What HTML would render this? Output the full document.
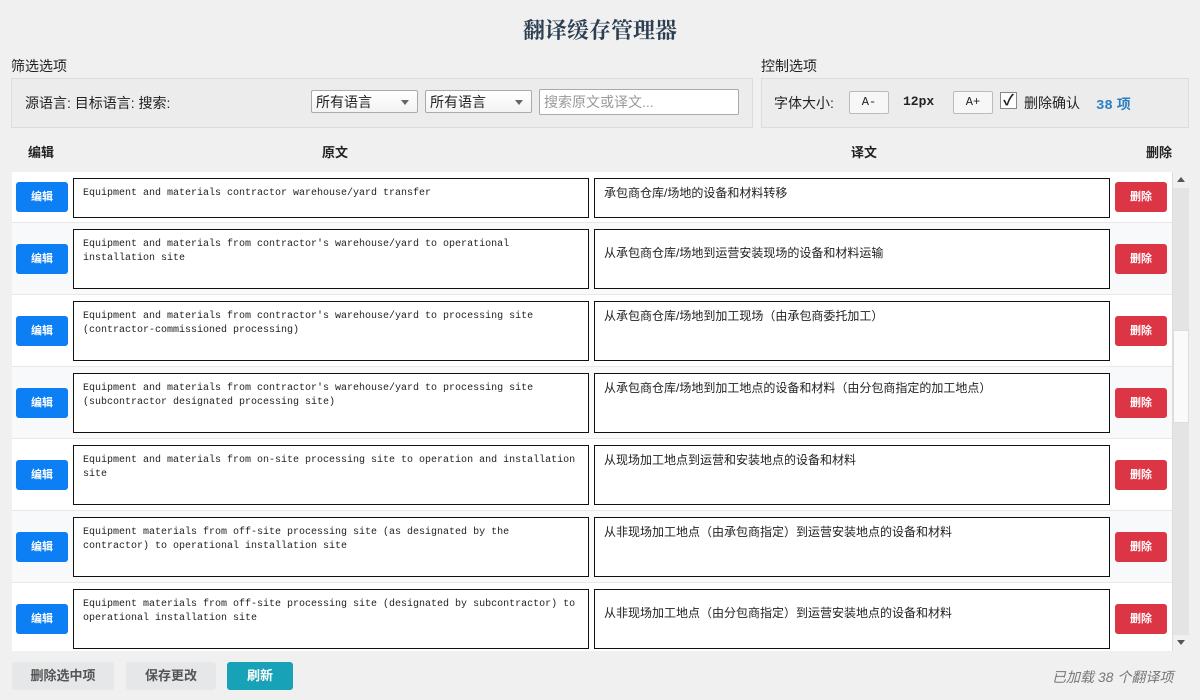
<!DOCTYPE html>
<html><head><meta charset="utf-8"><style>
*{box-sizing:border-box;margin:0;padding:0}
body{width:1200px;height:700px;background:#f0f0f0;font-family:"Liberation Sans","Noto Sans CJK SC",sans-serif;font-size:14px;color:#222;position:relative;overflow:hidden}
.abs{position:absolute}
h1{position:absolute;top:14px;left:0;width:1200px;text-align:center;font-family:"Noto Serif CJK SC",serif;font-size:22px;color:#2c3e50;font-weight:bold}
.panel{position:absolute;top:78px;height:50px;background:#ececec;border:1px solid #dcdcdc}
.sel{position:absolute;top:90px;height:23px;background:#fff;border:1px solid #aaa;border-radius:2px;font-size:14px;padding:1px 4px;background:linear-gradient(#fff,#f3f3f3)}
.sel:after{content:"";position:absolute;right:8px;top:9px;border:4px solid transparent;border-top:5px solid #666}
.btnsm{position:absolute;top:91px;height:23px;border:1px solid #bbb;background:#f7f7f7;font-family:"Liberation Mono",monospace;font-size:12px;text-align:center;line-height:21px;border-radius:2px}
.th{position:absolute;top:142px;font-weight:bold;font-size:13px}
.list{position:absolute;left:12px;top:172px;width:1177px;height:479px;background:#fff;overflow:hidden}
.row{position:absolute;left:0;width:1160px;border-bottom:1px solid #e8e8e8}
.ed{position:absolute;left:4px;width:52px;height:30px;background:#0d7ff5;color:#fff;font-size:11px;font-weight:bold;text-align:center;line-height:30px;border-radius:3px}
.del{position:absolute;left:1103px;width:52px;height:30px;background:#dc3545;color:#fff;font-size:11px;font-weight:bold;text-align:center;line-height:30px;border-radius:3px}
.box{position:absolute;border:1px solid #111;background:#fff;font-size:11px;padding:8px 9px;line-height:14px}
.o{left:61px;width:516px;font-family:"Liberation Mono","Noto Sans CJK SC",monospace;font-size:10px}
.t{left:582px;width:516px;font-size:12px;padding-top:7px}
.fb{position:absolute;top:662px;height:28px;border-radius:3px;font-size:13px;font-weight:bold;text-align:center;line-height:28px}
</style></head><body>
<h1>翻译缓存管理器</h1>
<div class="abs" style="left:11px;top:56px;font-size:14px">筛选选项</div>
<div class="abs" style="left:761px;top:56px;font-size:14px">控制选项</div>
<div class="panel" style="left:11px;width:742px"></div>
<div class="panel" style="left:761px;width:428px"></div>
<div class="abs" style="left:25px;top:93px">源语言: 目标语言: 搜索:</div>
<div class="sel" style="left:311px;width:107px">所有语言</div>
<div class="sel" style="left:425px;width:107px">所有语言</div>
<div class="abs" style="left:539px;top:89px;width:200px;height:26px;border:1px solid #aaa;background:#fff;border-radius:2px;color:#999;padding:2px 4px;font-size:14px">搜索原文或译文...</div>
<div class="abs" style="left:774px;top:93px">字体大小:</div>
<div class="btnsm" style="left:849px;width:40px">A-</div>
<div class="abs" style="left:903px;top:94px;font-family:'Liberation Mono',monospace;font-weight:bold;font-size:13px">12px</div>
<div class="btnsm" style="left:953px;width:40px">A+</div>
<div class="abs" style="left:1000px;top:92px;width:17px;height:17px;border:1px solid #888;background:#fff;font-size:15px;line-height:15px;text-align:center;font-weight:bold">✓</div>
<div class="abs" style="left:1024px;top:93px">删除确认</div>
<div class="abs" style="left:1096px;top:94px;color:#2a7fc0;font-weight:bold;font-size:14px"><span style="font-family:'Liberation Mono',monospace">38</span> 项</div>
<div class="th" style="left:28px">编辑</div>
<div class="th" style="left:322px">原文</div>
<div class="th" style="left:851px">译文</div>
<div class="th" style="left:1146px">删除</div>
<div class="list">
<div class="row" style="top:0;height:51px"><div class="ed" style="top:10px">编辑</div><div class="box o" style="top:6px;height:40px">Equipment and materials contractor warehouse/yard transfer</div><div class="box t" style="top:6px;height:40px">承包商仓库/场地的设备和材料转移</div><div class="del" style="top:10px">删除</div></div>
<div class="row" style="top:51px;height:72px;background:#f8f9fb"><div class="ed" style="top:21px">编辑</div><div class="box o" style="top:6px;height:60px">Equipment and materials from contractor's warehouse/yard to operational installation site</div><div class="box t" style="top:6px;height:60px;padding-top:16px">从承包商仓库/场地到运营安装现场的设备和材料运输</div><div class="del" style="top:21px">删除</div></div>
<div class="row" style="top:123px;height:72px"><div class="ed" style="top:21px">编辑</div><div class="box o" style="top:6px;height:60px">Equipment and materials from contractor's warehouse/yard to processing site (contractor-commissioned processing)</div><div class="box t" style="top:6px;height:60px">从承包商仓库/场地到加工现场（由承包商委托加工）</div><div class="del" style="top:21px">删除</div></div>
<div class="row" style="top:195px;height:72px;background:#f8f9fb"><div class="ed" style="top:21px">编辑</div><div class="box o" style="top:6px;height:60px">Equipment and materials from contractor's warehouse/yard to processing site (subcontractor designated processing site)</div><div class="box t" style="top:6px;height:60px">从承包商仓库/场地到加工地点的设备和材料（由分包商指定的加工地点）</div><div class="del" style="top:21px">删除</div></div>
<div class="row" style="top:267px;height:72px"><div class="ed" style="top:21px">编辑</div><div class="box o" style="top:6px;height:60px">Equipment and materials from on-site processing site to operation and installation site</div><div class="box t" style="top:6px;height:60px">从现场加工地点到运营和安装地点的设备和材料</div><div class="del" style="top:21px">删除</div></div>
<div class="row" style="top:339px;height:72px;background:#f8f9fb"><div class="ed" style="top:21px">编辑</div><div class="box o" style="top:6px;height:60px">Equipment materials from off-site processing site (as designated by the contractor) to operational installation site</div><div class="box t" style="top:6px;height:60px">从非现场加工地点（由承包商指定）到运营安装地点的设备和材料</div><div class="del" style="top:21px">删除</div></div>
<div class="row" style="top:411px;height:72px"><div class="ed" style="top:21px">编辑</div><div class="box o" style="top:6px;height:60px">Equipment materials from off-site processing site (designated by subcontractor) to operational installation site</div><div class="box t" style="top:6px;height:60px;padding-top:16px">从非现场加工地点（由分包商指定）到运营安装地点的设备和材料</div><div class="del" style="top:21px">删除</div></div>
<div class="abs" style="left:1160px;top:0;width:17px;height:479px;background:#f0f0f0;border-left:1px solid #ddd"></div>
<div class="abs" style="left:1161px;top:16px;width:16px;height:142px;background:#e4e4e4"></div>
<div class="abs" style="left:1161px;top:158px;width:16px;height:93px;background:#fafafa;border:1px solid #ddd"></div>
<div class="abs" style="left:1161px;top:251px;width:16px;height:212px;background:#e4e4e4"></div>
<div class="abs" style="left:1165px;top:5px;border:4px solid transparent;border-bottom:5px solid #555;border-top:0"></div>
<div class="abs" style="left:1165px;top:468px;border:4px solid transparent;border-top:5px solid #555;border-bottom:0"></div>
</div>
<div class="fb" style="left:12px;width:102px;background:#e6e7e9;color:#555">删除选中项</div>
<div class="fb" style="left:126px;width:90px;background:#e6e7e9;color:#555">保存更改</div>
<div class="fb" style="left:227px;width:66px;background:#17a2b8;color:#fff">刷新</div>
<div class="abs" style="left:1052px;top:667px;color:#777;font-style:italic;font-size:14px">已加载 38 个翻译项</div>
</body></html>
